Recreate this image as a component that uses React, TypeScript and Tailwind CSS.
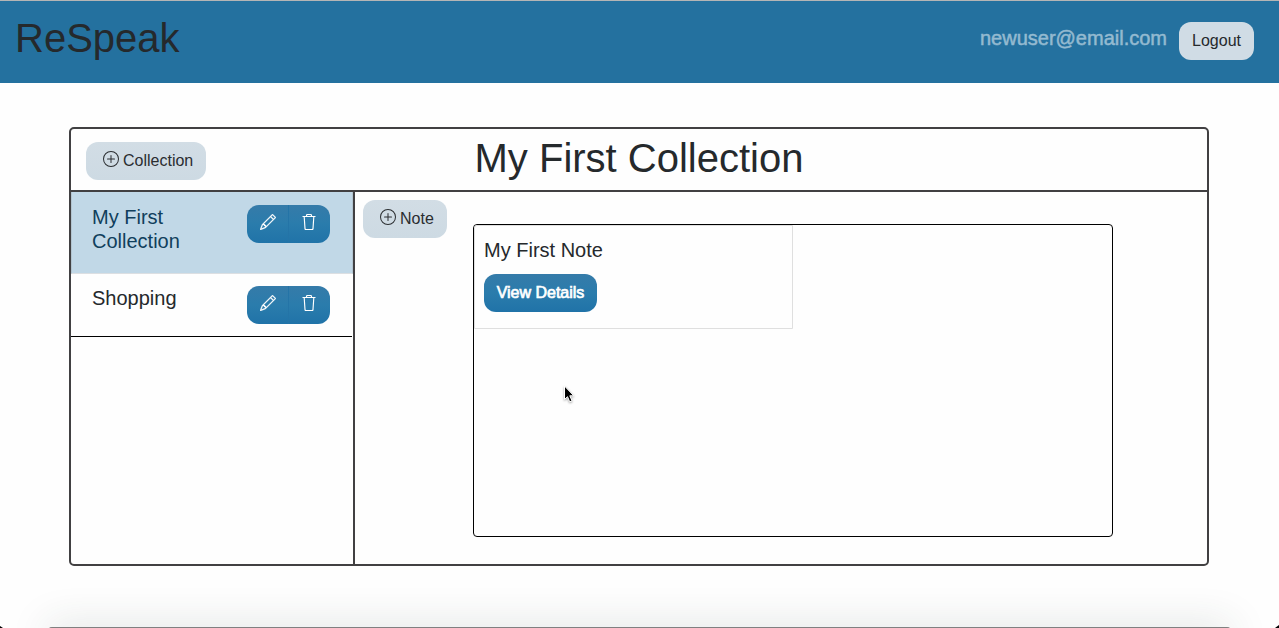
import { BsPencil, BsPlusCircle } from "react-icons/bs";

function TrashIcon() {
  return (
    <svg width="16" height="16" viewBox="0 0 16 16" fill="none" stroke="currentColor" strokeWidth="1.15">
      <path d="M1.5 2.5H14.5M5.5 2.5V1.5A1 1 0 0 1 6.5 .5H9.5A1 1 0 0 1 10.5 1.5V2.5M3.2 2.7L4 14.6A1 1 0 0 0 5 15.5H11A1 1 0 0 0 12 14.6L12.8 2.7" />
    </svg>
  );
}

function RowActions() {
  return (
    <div className="flex h-[38px] w-[83px] shrink-0 overflow-hidden rounded-[12px] bg-linear-to-b from-[#357ba9] via-[#2a7cac] to-[#2073a8] text-white">
      <button aria-label="Edit" className="flex w-[42px] justify-center border-r border-[#2474a7] pt-[9px]">
        <BsPencil size={16} strokeWidth={0.25} />
      </button>
      <button aria-label="Delete" className="flex flex-1 pl-[12px] pt-[9px]">
        <TrashIcon />
      </button>
    </div>
  );
}

function AddButton({ label, className }: { label: string; className: string }) {
  return (
    <button
      className={`flex h-[38px] shrink-0 rounded-[12px] bg-linear-to-b from-[#d2dde5] to-[#cddae3] pl-[17px] text-[16px] leading-[38px] text-[#2a2d30] ${className}`}
    >
      <BsPlusCircle size={16} className="mr-1 mt-[9px] shrink-0" />
      {label}
    </button>
  );
}

export default function App() {
  return (
    <div className="relative flex h-[628px] w-[1279px] flex-col overflow-hidden bg-[#fefefe] font-['Liberation_Sans',Arial,sans-serif] text-[#25292c]">
      <header className="flex h-[83px] shrink-0 border-t border-[#b5b5b5] bg-[#24719f] pl-[15px] pr-[25px]">
        <h1 className="mt-[13px] text-[40px] leading-[48px]">ReSpeak</h1>
        <span className="ml-auto mt-[22px] text-[20px] leading-[30px] text-[#94bad0] [-webkit-text-stroke:0.5px_#94bad0]">newuser@email.com</span>
        <button className="ml-[12px] mt-[21px] h-[38px] w-[75px] rounded-[12px] bg-[#d0dce5] text-[16px] leading-[38px] text-[#25292c]">
          Logout
        </button>
      </header>

      <main className="ml-[69px] mt-[44px] flex h-[439px] w-[1140px] shrink-0 flex-col rounded-[5px] border-2 border-[#414042]">
        <div className="grid h-[63px] shrink-0 grid-cols-[1fr_auto_1fr] border-b-2 border-[#414042]">
          <AddButton label="Collection" className="ml-[15px] mt-[13px] w-[120px]" />
          <h2 className="mt-[5px] text-[40px] leading-[48px]">My First Collection</h2>
        </div>
        <div className="flex min-h-0 flex-1">
          <aside className="w-[284px] shrink-0 border-r-2 border-[#414042]">
            <div className="flex h-[82px] justify-between border-x border-b border-x-[#b3c5d1] border-b-[#dcdfe2] bg-[#c1d8e7] pl-[20px] pr-[22px] pt-[13px] text-[20px] leading-6 text-[#103f5c]">
              <span className="w-[110px]">My First Collection</span>
              <RowActions />
            </div>
            <div className="mr-px flex h-[63px] justify-between border-b border-black pl-[21px] pr-[22px] pt-[12px] text-[20px] leading-6">
              <span>Shopping</span>
              <RowActions />
            </div>
          </aside>
          <section className="flex flex-1 pl-[8px] pt-[8px]">
            <AddButton label="Note" className="w-[84px]" />
            <div className="ml-[26px] mt-[24px] h-[313px] w-[640px] rounded-[4px] border border-black">
              <article className="h-[104px] w-[319px] rounded-tl-[3px] border border-[#dfdfdf] pl-[9px] pt-[12px]">
                <h3 className="text-[20px] leading-6">My First Note</h3>
                <button className="mt-[12px] block h-[38px] w-[113px] rounded-[12px] bg-linear-to-b from-[#357ba9] via-[#2a7cac] to-[#2073a8] text-[16px] leading-[38px] text-white [-webkit-text-stroke:0.7px_white]">
                  View Details
                </button>
              </article>
            </div>
          </section>
        </div>
      </main>

      <svg className="absolute left-[561px] top-[383px] drop-shadow-[0_1px_1px_rgba(0,0,0,0.35)]" width="15" height="22" viewBox="0 0 15 22">
        <path d="M3.5 3V16.5L6.5 13.7L8.7 18.8L11 17.8L8.8 12.8H12.8Z" fill="black" stroke="white" strokeWidth="1" />
      </svg>

      <div className="absolute -bottom-[19px] left-[48px] h-5 w-[1183px] rounded-[4px] border-t border-[#808080] bg-[#808080] shadow-[0_0_40px_rgba(40,60,50,0.18)]" />
      <svg className="absolute bottom-0 left-0" width="3" height="2" viewBox="0 0 3 2">
        <path d="M0 0L3 2H0Z" fill="black" />
      </svg>
      <svg className="absolute bottom-0 right-0" width="4" height="3" viewBox="0 0 4 3">
        <path d="M4 0L0 3H4Z" fill="black" />
      </svg>
    </div>
  );
}
